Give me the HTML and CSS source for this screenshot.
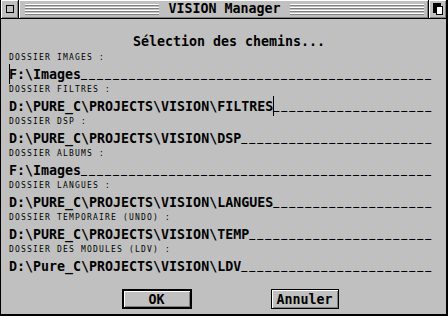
FILE: index.html
```html
<!DOCTYPE html>
<html lang="fr">
<head>
  <meta charset="UTF-8">
  <title>VISION Manager</title>
  <link rel="stylesheet" href="styles.css">
</head>
<body>

  <div class="window">
    <div class="titlebar">
      <div class="closer"><span class="closer-box"></span></div>
      <div class="title-area">
        <div class="stripes"></div>
        <div class="title">VISION Manager</div>
        <div class="stripes"></div>
      </div>
      <div class="fuller">
        <svg width="10" height="12" viewBox="0 0 10 12">
          <rect x="0" y="0" width="8" height="10" fill="#000"/>
          <rect x="3.5" y="3.5" width="6" height="8" fill="#fff" stroke="#000"/>
        </svg>
      </div>
    </div>

    <div class="content">
      <h1 class="heading">Sélection des chemins...</h1>

      <div class="group">
        <div class="label">DOSSIER IMAGES :</div>
        <div class="field"><span class="cursor"></span>F:\Images<span class="fill">____________________________________________</span></div>
      </div>
      <div class="group">
        <div class="label">DOSSIER FILTRES :</div>
        <div class="field">D:\PURE_C\PROJECTS\VISION\FILTRES<span class="cursor"></span><span class="fill">____________________</span></div>
      </div>
      <div class="group">
        <div class="label">DOSSIER DSP :</div>
        <div class="field">D:\PURE_C\PROJECTS\VISION\DSP<span class="fill">________________________</span></div>
      </div>
      <div class="group">
        <div class="label">DOSSIER ALBUMS :</div>
        <div class="field">F:\Images<span class="fill">____________________________________________</span></div>
      </div>
      <div class="group">
        <div class="label">DOSSIER LANGUES :</div>
        <div class="field">D:\PURE_C\PROJECTS\VISION\LANGUES<span class="fill">____________________</span></div>
      </div>
      <div class="group">
        <div class="label">DOSSIER TEMPORAIRE (UNDO) :</div>
        <div class="field">D:\PURE_C\PROJECTS\VISION\TEMP<span class="fill">_______________________</span></div>
      </div>
      <div class="group">
        <div class="label">DOSSIER DES MODULES (LDV) :</div>
        <div class="field">D:\Pure_C\PROJECTS\VISION\LDV<span class="fill">________________________</span></div>
      </div>

      <div class="buttons">
        <button class="btn btn-default">OK</button>
        <button class="btn btn-cancel">Annuler</button>
      </div>
    </div>
  </div>

</body>
</html>
```

FILE: styles.css
```css
body {
  margin: 0;
  background: #c0c0c0;
  font-family: 'DejaVu Sans Mono', monospace;
  color: #000;
}

.window {
  width: 448px;
  height: 316px;
  box-sizing: border-box;
  background: #c0c0c0;
  border-left: 1px solid #000;
  border-right: 2px solid #000;
  border-bottom: 2px solid #000;
  display: flex;
  flex-direction: column;
}

/* barre de titre */
.titlebar {
  height: 18px;
  display: flex;
  border-bottom: 1px solid #000;
}

.closer {
  width: 17px;
  border-right: 1px solid #000;
  box-shadow: inset 1px 1px #fff, inset -1px -1px #808080;
  display: flex;
  align-items: center;
  justify-content: center;
}

.closer-box {
  width: 6px;
  height: 6px;
  border: 1px solid #000;
}

.title-area {
  flex: 1;
  display: flex;
  align-items: center;
  padding: 0 4px 0 6px;
  box-shadow: inset 1px 1px #fff, inset -1px -1px #808080;
}

.stripes {
  flex: 1;
  height: 11px;
  background: repeating-linear-gradient(to bottom, #fff 0 1px, #808080 1px 2px, #c0c0c0 2px 3px);
}

.title {
  padding: 0 9px;
  font-size: 13.3px;
  font-weight: bold;
  line-height: 18px;
  white-space: nowrap;
}

.fuller {
  width: 17px;
  border-left: 1px solid #000;
  box-shadow: inset 1px 1px #fff, inset -1px -1px #808080;
  display: flex;
  align-items: center;
  justify-content: center;
}

.fuller svg {
  display: block;
}

/* contenu */
.content {
  flex: 1;
  display: flex;
  flex-direction: column;
}

.heading {
  margin: 15px 0 2px;
  padding-left: 11px;
  font-size: 13.3px;
  font-weight: bold;
  line-height: 16px;
  text-align: center;
}

.group {
  padding-left: 8px;
}

.label {
  height: 12px;
  font-size: 8px;
  line-height: 12px;
  letter-spacing: 1.18px;
  white-space: nowrap;
}

.field {
  height: 20px;
  font-size: 13.3px;
  font-weight: bold;
  line-height: 20px;
  white-space: nowrap;
}

/* soulignés en tirets, un tiret par caractère */
.fill {
  font-size: 10px;
  font-weight: bold;
  letter-spacing: 1.98px;
  vertical-align: 2px;
}

.cursor {
  display: inline-block;
  width: 0;
  height: 20px;
  margin-right: -1px;
  border-left: 1px solid #000;
  vertical-align: top;
}

.buttons {
  display: flex;
  justify-content: center;
  gap: 79px;
  margin-top: 13px;
  padding-left: 13px;
}

.btn {
  height: 20px;
  box-sizing: border-box;
  padding: 0;
  background: #c0c0c0;
  border: 1px solid #000;
  box-shadow: inset 1px 1px #fff, inset -1px -1px #808080;
  font-family: 'DejaVu Sans Mono', monospace;
  font-size: 13.3px;
  font-weight: bold;
  color: #000;
}

.btn-default {
  width: 70px;
  border-width: 2px;
}

.btn-cancel {
  width: 68px;
}
```
